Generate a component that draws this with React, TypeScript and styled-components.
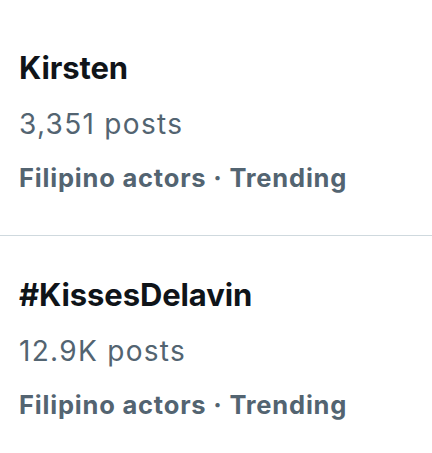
import React from "react";
import styled, { createGlobalStyle } from "styled-components";

const Global = createGlobalStyle`
  html, body { margin: 0; padding: 0; background: #ffffff; }
  body { font-family: Inter, "Noto Sans", "Liberation Sans", sans-serif; -webkit-font-smoothing: antialiased; }
`;

const List = styled.div`
  display: flex;
  flex-direction: column;
  padding-top: 9px;
`;

const Item = styled.div<{ $divider?: boolean }>`
  display: flex;
  flex-direction: column;
  padding: 41px 0 42px 19px;
  border-bottom: ${(p) => (p.$divider ? "1px solid #cfd9de" : "none")};
`;

const Title = styled.div`
  font-size: 31px;
  line-height: 36px;
  font-weight: 700;
  color: #0f1419;
  letter-spacing: -0.1px;
`;

const Posts = styled.div`
  margin-top: 22px;
  font-size: 28px;
  line-height: 32px;
  font-weight: 400;
  color: #536471;
  letter-spacing: 1.3px;
`;

const Meta = styled.div`
  margin-top: 23px;
  font-size: 25.5px;
  line-height: 30px;
  font-weight: 700;
  color: #536471;
  letter-spacing: 0.8px;
`;

const trends = [
  { title: "Kirsten", posts: "3,351 posts", meta: "Filipino actors · Trending" },
  { title: "#KissesDelavin", posts: "12.9K posts", meta: "Filipino actors · Trending" },
];

export default function App() {
  return (
    <>
      <Global />
      <List>
        {trends.map((t, i) => (
          <Item key={t.title} $divider={i < trends.length - 1}>
            <Title>{t.title}</Title>
            <Posts>{t.posts}</Posts>
            <Meta>{t.meta}</Meta>
          </Item>
        ))}
      </List>
    </>
  );
}
